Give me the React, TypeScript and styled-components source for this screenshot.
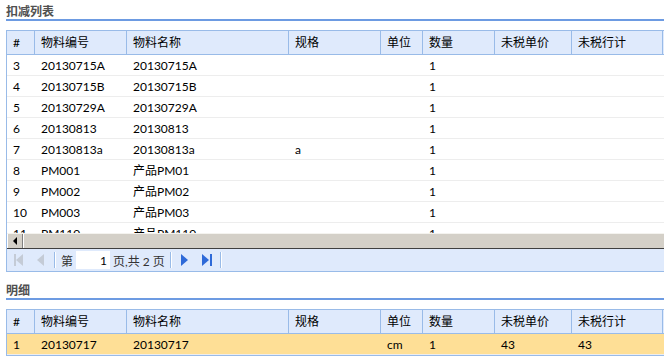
import React from 'react';
import styled, { createGlobalStyle } from 'styled-components';

const GlobalStyle = createGlobalStyle`
    html, body {
        margin: 0;
        padding: 0;
        overflow: hidden;
        background: #fff;
    }
    body {
        font-family: Lato, "Noto Sans CJK SC", sans-serif;
        font-size: 12px;
        color: #000;
    }
`;

const COLS = '28px 92px 162px 92px 42px 72px 77px 91px 40px';

type Row = { no: string; code: string; name: string; spec?: string; unit?: string; qty: string; price?: string; total?: string };

const deductRows: Row[] = [
    { no: '3', code: '20130715A', name: '20130715A', qty: '1' },
    { no: '4', code: '20130715B', name: '20130715B', qty: '1' },
    { no: '5', code: '20130729A', name: '20130729A', qty: '1' },
    { no: '6', code: '20130813', name: '20130813', qty: '1' },
    { no: '7', code: '20130813a', name: '20130813a', spec: 'a', qty: '1' },
    { no: '8', code: 'PM001', name: '产品PM01', qty: '1' },
    { no: '9', code: 'PM002', name: '产品PM02', qty: '1' },
    { no: '10', code: 'PM003', name: '产品PM03', qty: '1' },
    { no: '11', code: 'PM110', name: '产品PM110', qty: '1' },
];

const detailRows: Row[] = [{ no: '1', code: '20130717', name: '20130717', unit: 'cm', qty: '1', price: '43', total: '43' }];

const headers = ['#', '物料编号', '物料名称', '规格', '单位', '数量', '未税单价', '未税行计', ''];

const Page = styled.div`
    width: 700px;
    padding: 0 0 0 6px;
`;

const Section = styled.div<{ top: number }>`
    padding-top: ${p => p.top}px;
`;

const SectionTitle = styled.div`
    height: 21px;
    padding-top: 5px;
    box-sizing: border-box;
    border-bottom: 2px solid #6d9be2;
    font-weight: bold;
    color: #505050;
    line-height: 14px;
`;

const Grid = styled.div`
    margin-top: 9px;
    border-left: 1px solid #99bbe8;
    border-top: 1px solid #99bbe8;
    border-bottom: 1px solid #99bbe8;
`;

const HeaderRow = styled.div`
    display: grid;
    grid-template-columns: ${COLS};
    height: 23px;
    background: #dfeafc;
    border-bottom: 1px solid #99bbe8;
`;

const HeaderCell = styled.div`
    border-right: 1px solid #99bbe8;
    padding-left: 6px;
    line-height: 23px;
    white-space: nowrap;
`;

const Body = styled.div<{ h: number }>`
    height: ${p => p.h}px;
    overflow: hidden;
`;

const DataRow = styled.div<{ selected?: boolean }>`
    display: grid;
    grid-template-columns: ${COLS};
    height: 20px;
    border-bottom: 1px solid #ededed;
    background: ${p => (p.selected ? '#fedf96' : '#fff')};
`;

const Cell = styled.div`
    padding-left: 6px;
    line-height: 21px;
    white-space: nowrap;
`;

const HScroll = styled.div`
    display: flex;
    height: 14px;
    background: #d4d0c8;
    border-top: 1px solid #f4f3ef;
    border-bottom: 1px solid #404040;
`;

const ScrollButton = styled.div`
    width: 16px;
    box-sizing: border-box;
    border-right: 1px solid #808080;
    border-left: 1px solid #fff;
    display: flex;
    align-items: center;
    justify-content: center;
`;

const ScrollThumb = styled.div`
    flex: 1;
    border-left: 1px solid #fff;
`;

const Pager = styled.div`
    display: flex;
    align-items: center;
    height: 22px;
    background: #dfeafc;
    padding-left: 2px;
`;

const PagerButton = styled.div`
    width: 21px;
    height: 20px;
    display: flex;
    align-items: center;
    justify-content: center;
`;

const Sep = styled.div`
    width: 2px;
    height: 16px;
    margin: 0 3px;
    border-left: 1px solid #99bbe8;
    border-right: 1px solid #fff;
    box-sizing: border-box;
`;

const PagerText = styled.span`
    color: #333;
    padding: 0 2px;
    white-space: nowrap;
`;

const PageInput = styled.div`
    width: 36px;
    height: 20px;
    box-sizing: border-box;
    background: #fff;
    border: 1px solid #dfeafc;
    text-align: right;
    padding-right: 3px;
    line-height: 20px;
    color: #000;
`;

const Arrow: React.FC<{ dir: 'left' | 'right'; bar?: boolean; on?: boolean }> = ({ dir, bar, on }) => {
    const fill = on ? '#2e6ad8' : '#c4cbd6';
    const pts = dir === 'left' ? '11,2 11,14 4,8' : '4,2 4,14 11,8';
    return (
        <svg width="16" height="16" viewBox="0 0 16 16">
            <polygon points={pts} fill={fill} />
            {bar && dir === 'left' && <rect x="2" y="2" width="2" height="12" fill={fill} />}
            {bar && dir === 'right' && <rect x="12" y="2" width="2" height="12" fill={fill} />}
        </svg>
    );
};

const renderRow = (r: Row, selected?: boolean) => (
    <DataRow key={r.no} selected={selected}>
        <Cell>{r.no}</Cell>
        <Cell>{r.code}</Cell>
        <Cell>{r.name}</Cell>
        <Cell>{r.spec}</Cell>
        <Cell>{r.unit}</Cell>
        <Cell>{r.qty}</Cell>
        <Cell>{r.price}</Cell>
        <Cell>{r.total}</Cell>
        <Cell />
    </DataRow>
);

const renderHeader = () => (
    <HeaderRow>
        {headers.map((h, i) => (
            <HeaderCell key={i}>{h}</HeaderCell>
        ))}
    </HeaderRow>
);

const App: React.FC = () => {
    return (
        <Page>
            <GlobalStyle />
            <Section top={0}>
                <SectionTitle>扣减列表</SectionTitle>
                <Grid>
                    {renderHeader()}
                    <Body h={178}>{deductRows.map(r => renderRow(r))}</Body>
                    <HScroll>
                        <ScrollButton>
                            <svg width="6" height="8" viewBox="0 0 6 8">
                                <polygon points="5,0 5,8 1,4" fill="#000" />
                            </svg>
                        </ScrollButton>
                        <ScrollThumb />
                    </HScroll>
                    <Pager>
                        <PagerButton>
                            <Arrow dir="left" bar />
                        </PagerButton>
                        <PagerButton>
                            <Arrow dir="left" />
                        </PagerButton>
                        <Sep />
                        <PagerText>第</PagerText>
                        <PageInput>1</PageInput>
                        <PagerText>页,共 2 页</PagerText>
                        <Sep />
                        <PagerButton>
                            <Arrow dir="right" on />
                        </PagerButton>
                        <PagerButton>
                            <Arrow dir="right" bar on />
                        </PagerButton>
                        <Sep />
                    </Pager>
                </Grid>
            </Section>
            <Section top={7}>
                <SectionTitle>明细</SectionTitle>
                <Grid>
                    {renderHeader()}
                    <Body h={21}>{detailRows.map(r => renderRow(r, true))}</Body>
                </Grid>
            </Section>
        </Page>
    );
};

export default App;
